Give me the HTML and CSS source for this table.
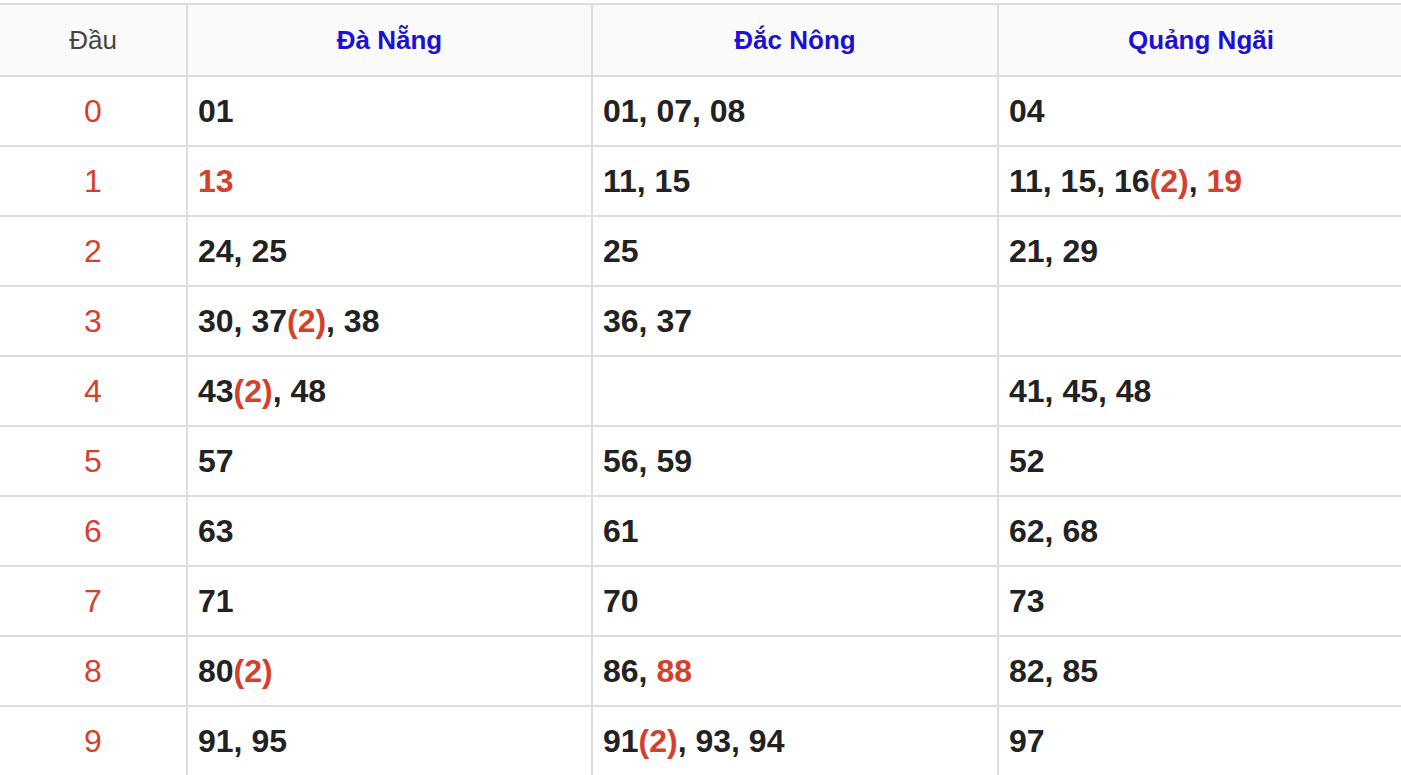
FILE: index.html
```html
<!DOCTYPE html>
<html lang="vi">
<head>
<meta charset="utf-8">
<title>Loto</title>
<link rel="stylesheet" href="styles.css">
</head>
<body>
<table class="loto">
  <colgroup>
    <col class="c-head">
    <col class="c-prov-a">
    <col class="c-prov-b">
    <col class="c-prov-b">
  </colgroup>
  <thead>
    <tr>
      <th class="h-dau">Đầu</th>
      <th class="h-prov">Đà Nẵng</th>
      <th class="h-prov">Đắc Nông</th>
      <th class="h-prov">Quảng Ngãi</th>
    </tr>
  </thead>
  <tbody>
    <tr><td class="dau">0</td><td>01</td><td>01, 07, 08</td><td>04</td></tr>
    <tr><td class="dau">1</td><td><span class="hl">13</span></td><td>11, 15</td><td>11, 15, 16<span class="hl">(2)</span>, <span class="hl">19</span></td></tr>
    <tr><td class="dau">2</td><td>24, 25</td><td>25</td><td>21, 29</td></tr>
    <tr><td class="dau">3</td><td>30, 37<span class="hl">(2)</span>, 38</td><td>36, 37</td><td></td></tr>
    <tr><td class="dau">4</td><td>43<span class="hl">(2)</span>, 48</td><td></td><td>41, 45, 48</td></tr>
    <tr><td class="dau">5</td><td>57</td><td>56, 59</td><td>52</td></tr>
    <tr><td class="dau">6</td><td>63</td><td>61</td><td>62, 68</td></tr>
    <tr><td class="dau">7</td><td>71</td><td>70</td><td>73</td></tr>
    <tr><td class="dau">8</td><td>80<span class="hl">(2)</span></td><td>86, <span class="hl">88</span></td><td>82, 85</td></tr>
    <tr><td class="dau">9</td><td>91, 95</td><td>91<span class="hl">(2)</span>, 93, 94</td><td>97</td></tr>
  </tbody>
</table>
</body>
</html>
```

FILE: styles.css
```css
html, body {
  margin: 0;
  padding: 0;
  background: #ffffff;
  overflow: hidden;
}

body {
  font-family: "Liberation Sans", Arial, sans-serif;
  color: #222222;
}

.loto {
  border-collapse: collapse;
  table-layout: fixed;
  width: 1405px;
  margin: 3px 0 0 -2px;
}

.c-head { width: 188px; }
.c-prov-a { width: 405px; }
.c-prov-b { width: 406px; }

.loto th,
.loto td {
  border: 2px solid #dddddd;
  padding: 0 10px;
  vertical-align: middle;
}

.loto th {
  background: #fafafa;
  height: 70px;
  font-size: 26px;
  text-align: center;
}

.h-dau {
  font-weight: normal;
  color: #444444;
}

.h-prov {
  font-weight: bold;
  color: #1d10d6;
}

.loto td {
  height: 68px;
  font-size: 32px;
  font-weight: bold;
  color: #222222;
  text-align: left;
}

.loto td.dau {
  font-weight: normal;
  color: #d6402a;
  text-align: center;
}

.hl {
  color: #d6402a;
}
```
